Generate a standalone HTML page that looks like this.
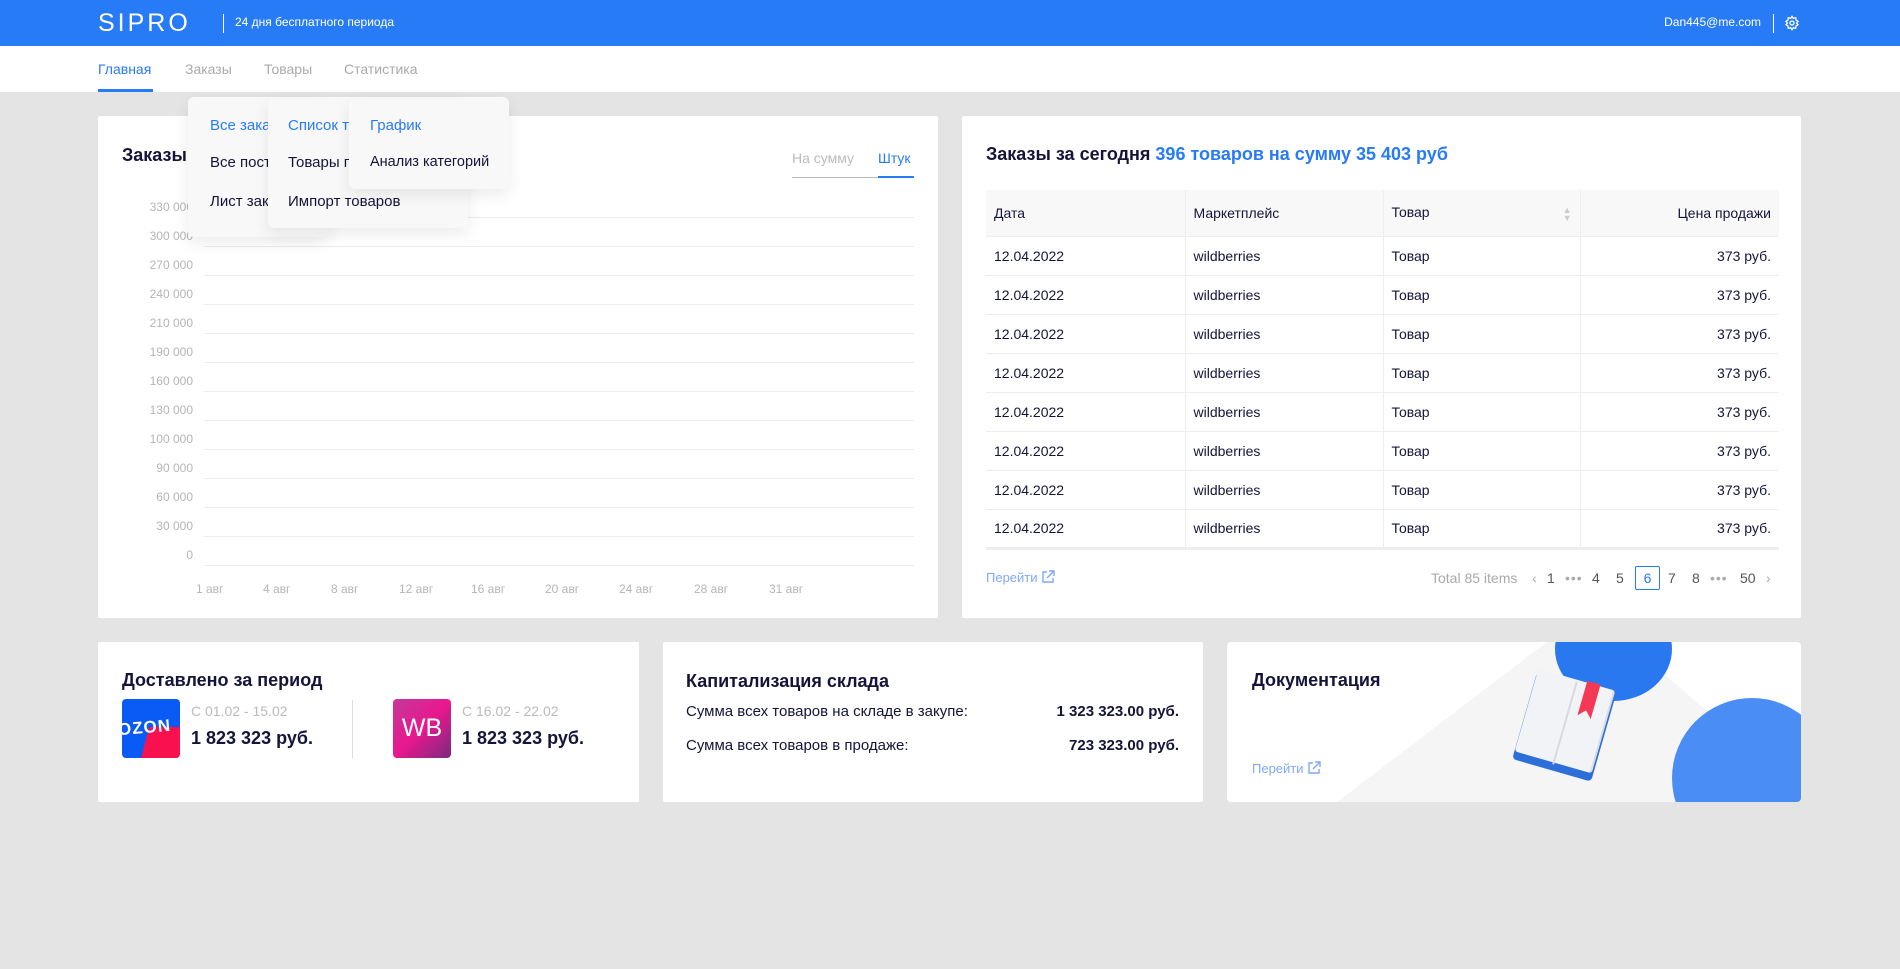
<!DOCTYPE html>
<html><head><meta charset="utf-8"><style>
*{box-sizing:border-box;margin:0;padding:0}
body{width:1900px;height:969px;background:#e4e4e4;font-family:"Liberation Sans","Noto Sans CJK SC",sans-serif;color:#14143a;position:relative;overflow:hidden}
.a{position:absolute;white-space:nowrap}
.hdr{left:0;top:0;width:1900px;height:46px;background:#287bf6}
.nav{left:0;top:46px;width:1900px;height:46px;background:#fff}
.card{background:#fff;position:absolute;border-radius:2px}
.grid{position:absolute;left:204px;width:710px;height:1px;background:#ececec}
.yl{position:absolute;right:1707px;font-size:12px;color:#b5b5b5;text-align:right}
.xl{position:absolute;top:582px;font-size:12px;color:#b5b5b5}
.dd{position:absolute;background:#f8f8f8;border-radius:6px;box-shadow:0 6px 16px rgba(0,0,0,.08)}
.di{position:absolute;font-size:15px;color:#14143a}
table{border-collapse:collapse;position:absolute;left:986px;top:190px;width:793px;font-size:14px}
td{height:39px;border-bottom:1px solid #eee;border-right:1px solid #eee;padding:0 8px;color:#14143a}
tr.h td{height:46px;background:#f8f8f8;font-weight:500}
tr.l td{border-bottom:3px solid #eee}
td:last-child{text-align:right;border-right:none}
.pg{position:absolute;top:570px;font-size:14px;color:#555}
</style></head><body>
<div class="a hdr"></div>
<div class="a" style="left:98px;top:9px;font-size:25px;color:#fff;letter-spacing:3px;font-weight:300">SIPRO</div>
<div class="a" style="left:223px;top:14px;width:1px;height:19px;background:#fff"></div>
<div class="a" style="left:235px;top:15px;font-size:12px;color:#fff">24 дня бесплатного периода</div>
<div class="a" style="right:139px;top:15px;font-size:12px;color:#fff">Dan445@me.com</div>
<div class="a" style="left:1773px;top:14px;width:1px;height:19px;background:#fff"></div>
<svg class="a" style="left:1784px;top:15px" width="16" height="16" viewBox="0 0 24 24" fill="none" stroke="#fff" stroke-width="2"><circle cx="12" cy="12" r="3"/><path d="M12 2l2 3 3.5-1 .5 3.5 3 2-2 2.5 2 2.5-3 2-.5 3.5-3.5-1-2 3-2-3-3.5 1-.5-3.5-3-2 2-2.5-2-2.5 3-2L6.5 4 10 5z"/></svg>
<div class="a nav"></div>
<div class="a" style="left:98px;top:61px;font-size:14px;color:#287bf6">Главная</div>
<div class="a" style="left:98px;top:89px;width:55px;height:3px;background:#287bf6"></div>
<div class="a" style="left:185px;top:61px;font-size:14px;color:#aaa">Заказы</div>
<div class="a" style="left:264px;top:61px;font-size:14px;color:#aaa">Товары</div>
<div class="a" style="left:344px;top:61px;font-size:14px;color:#aaa">Статистика</div>

<div class="card" style="left:98px;top:116px;width:840px;height:502px"></div>
<div class="a" style="left:122px;top:145px;font-size:18px;font-weight:bold">Заказы</div>
<div class="a" style="left:792px;top:150px;font-size:14px;color:#bbb">На сумму</div>
<div class="a" style="left:878px;top:150px;font-size:14px;color:#287bf6">Штук</div>
<div class="a" style="left:792px;top:177px;width:122px;height:1px;background:#bbb"></div>
<div class="a" style="left:878px;top:176px;width:36px;height:2px;background:#287bf6"></div>
<div class="grid" style="top:217px"></div><div class="grid" style="top:246px"></div><div class="grid" style="top:275px"></div><div class="grid" style="top:304px"></div><div class="grid" style="top:333px"></div><div class="grid" style="top:362px"></div><div class="grid" style="top:391px"></div><div class="grid" style="top:420px"></div><div class="grid" style="top:449px"></div><div class="grid" style="top:478px"></div><div class="grid" style="top:507px"></div><div class="grid" style="top:536px"></div><div class="grid" style="top:565px"></div>
<div class="yl" style="top:200px">330 000</div><div class="yl" style="top:229px">300 000</div><div class="yl" style="top:258px">270 000</div><div class="yl" style="top:287px">240 000</div><div class="yl" style="top:316px">210 000</div><div class="yl" style="top:345px">190 000</div><div class="yl" style="top:374px">160 000</div><div class="yl" style="top:403px">130 000</div><div class="yl" style="top:432px">100 000</div><div class="yl" style="top:461px">90 000</div><div class="yl" style="top:490px">60 000</div><div class="yl" style="top:519px">30 000</div><div class="yl" style="top:548px">0</div>
<div class="xl" style="left:196px">1 авг</div><div class="xl" style="left:263px">4 авг</div><div class="xl" style="left:331px">8 авг</div><div class="xl" style="left:399px">12 авг</div><div class="xl" style="left:471px">16 авг</div><div class="xl" style="left:545px">20 авг</div><div class="xl" style="left:619px">24 авг</div><div class="xl" style="left:694px">28 авг</div><div class="xl" style="left:769px">31 авг</div>

<div class="dd" style="left:188px;top:97px;width:140px;height:140px;overflow:hidden">
<div class="di" style="left:22px;top:20px;color:#287bf6">Все заказы</div>
<div class="di" style="left:22px;top:57px">Все поставки</div>
<div class="di" style="left:22px;top:96px">Лист закупок</div></div>
<div class="dd" style="left:268px;top:97px;width:200px;height:131px;overflow:hidden">
<div class="di" style="left:20px;top:20px;color:#287bf6">Список товаров</div>
<div class="di" style="left:20px;top:57px">Товары по складам</div>
<div class="di" style="left:20px;top:96px">Импорт товаров</div></div>
<div class="dd" style="left:349px;top:97px;width:160px;height:92px">
<div class="di" style="left:21px;top:20px;color:#287bf6">График</div>
<div class="di" style="left:21px;top:57px;font-size:14.5px">Анализ категорий</div></div>

<div class="card" style="left:962px;top:116px;width:839px;height:502px"></div>
<div class="a" style="left:986px;top:144px;font-size:18px;font-weight:bold">Заказы за сегодня <span style="color:#287bf6">396 товаров на сумму 35 403 руб</span></div>
<table>
<tr class="h"><td style="width:199px">Дата</td><td style="width:198px">Маркетплейс</td><td style="width:197px">Товар<span style="float:right;color:#ccc;font-size:9px;line-height:8px;margin-top:2px">▲<br>▼</span></td><td>Цена продажи</td></tr>
<tr><td>12.04.2022</td><td>wildberries</td><td>Товар</td><td>373 руб.</td></tr>
<tr><td>12.04.2022</td><td>wildberries</td><td>Товар</td><td>373 руб.</td></tr>
<tr><td>12.04.2022</td><td>wildberries</td><td>Товар</td><td>373 руб.</td></tr>
<tr><td>12.04.2022</td><td>wildberries</td><td>Товар</td><td>373 руб.</td></tr>
<tr><td>12.04.2022</td><td>wildberries</td><td>Товар</td><td>373 руб.</td></tr>
<tr><td>12.04.2022</td><td>wildberries</td><td>Товар</td><td>373 руб.</td></tr>
<tr><td>12.04.2022</td><td>wildberries</td><td>Товар</td><td>373 руб.</td></tr>
<tr class="l"><td>12.04.2022</td><td>wildberries</td><td>Товар</td><td>373 руб.</td></tr>
</table>
<div class="a" style="left:986px;top:570px;font-size:13px;color:#7fa8f8">Перейти <svg width="14" height="14" viewBox="0 0 14 14" fill="none" stroke="#7fa8f8" stroke-width="1.4" style="vertical-align:-2px"><path d="M6 2H2v10h10V8M8 1h5v5M13 1L6 8"/></svg></div>
<div class="pg" style="left:1431px;color:#aaa">Total 85 items</div>
<div class="pg" style="left:1532px;color:#aaa">‹</div>
<div class="pg" style="left:1547px">1</div>
<div class="pg" style="left:1565px;color:#aaa;letter-spacing:1px">•••</div>
<div class="pg" style="left:1592px">4</div>
<div class="pg" style="left:1616px">5</div>
<div class="a" style="left:1635px;top:566px;width:25px;height:24px;border:1px solid #287bf6;border-radius:2px;color:#287bf6;font-size:14px;text-align:center;line-height:22px">6</div>
<div class="pg" style="left:1668px">7</div>
<div class="pg" style="left:1692px">8</div>
<div class="pg" style="left:1710px;color:#aaa;letter-spacing:1px">•••</div>
<div class="pg" style="left:1740px">50</div>
<div class="pg" style="left:1766px;color:#aaa">›</div>

<div class="card" style="left:98px;top:642px;width:541px;height:160px"></div>
<div class="a" style="left:122px;top:670px;font-size:18px;font-weight:bold">Доставлено за период</div>
<div class="a" style="left:122px;top:699px;width:58px;height:59px;border-radius:4px;background:#0a5bf5;overflow:hidden">
<div style="position:absolute;left:22px;top:28px;width:48px;height:40px;background:#f8104f;transform:skewX(-15deg)"></div>
<div style="position:absolute;left:-4px;top:19px;font-size:17px;font-weight:bold;color:#fff;letter-spacing:1px;transform:rotate(-5deg)">OZON</div></div>
<div class="a" style="left:191px;top:703px;font-size:14px;color:#bbb">С 01.02 - 15.02</div>
<div class="a" style="left:191px;top:728px;font-size:18px;font-weight:bold">1 823 323 руб.</div>
<div class="a" style="left:352px;top:700px;width:1px;height:58px;background:#ddd"></div>
<div class="a" style="left:393px;top:699px;width:58px;height:59px;border-radius:4px;background:linear-gradient(135deg,#c2399a,#e8188e 50%,#7a2a80);text-align:center;color:#fff;font-size:25px;line-height:59px">WB</div>
<div class="a" style="left:462px;top:703px;font-size:14px;color:#bbb">С 16.02 - 22.02</div>
<div class="a" style="left:462px;top:728px;font-size:18px;font-weight:bold">1 823 323 руб.</div>

<div class="card" style="left:663px;top:642px;width:540px;height:160px"></div>
<div class="a" style="left:686px;top:671px;font-size:18px;font-weight:bold">Капитализация склада</div>
<div class="a" style="left:686px;top:703px;font-size:15px">Сумма всех товаров на складе в закупе:</div>
<div class="a" style="right:721px;top:703px;font-size:15px;font-weight:bold">1 323 323.00 руб.</div>
<div class="a" style="left:686px;top:737px;font-size:15px">Сумма всех товаров в продаже:</div>
<div class="a" style="right:721px;top:737px;font-size:15px;font-weight:bold">723 323.00 руб.</div>

<div class="card" style="left:1227px;top:642px;width:574px;height:160px;overflow:hidden;border-radius:4px">
<div style="position:absolute;left:0;top:0;width:574px;height:160px;background:#f5f5f5;clip-path:polygon(320px 0,400px 0,574px 150px,574px 160px,110px 160px)"></div>
<div style="position:absolute;left:328px;top:-45px;width:117px;height:104px;border-radius:50%;background:#2a78f0"></div>
<div style="position:absolute;left:445px;top:56px;width:160px;height:160px;border-radius:50%;background:#4a8ef5"></div>
<div style="position:absolute;left:296px;top:40px;width:82px;height:90px;background:#2d6fd8;border-radius:4px;transform:rotate(16deg)"></div>
<div style="position:absolute;left:298px;top:36px;width:80px;height:86px;background:#f2f3f7;border-radius:3px;transform:rotate(16deg);box-shadow:inset -2px 0 0 #ddd"></div>
<div style="position:absolute;left:337px;top:38px;width:2px;height:86px;background:#d8d9de;transform:rotate(16deg)"></div>
<div style="position:absolute;left:355px;top:40px;width:14px;height:36px;background:#f53955;transform:rotate(16deg);clip-path:polygon(0 0,100% 0,100% 100%,50% 80%,0 100%)"></div>
</div>
<div class="a" style="left:1252px;top:670px;font-size:18px;font-weight:bold">Документация</div>
<div class="a" style="left:1252px;top:761px;font-size:13px;color:#7fa8f8">Перейти <svg width="14" height="14" viewBox="0 0 14 14" fill="none" stroke="#7fa8f8" stroke-width="1.4" style="vertical-align:-2px"><path d="M6 2H2v10h10V8M8 1h5v5M13 1L6 8"/></svg></div>
</body></html>
